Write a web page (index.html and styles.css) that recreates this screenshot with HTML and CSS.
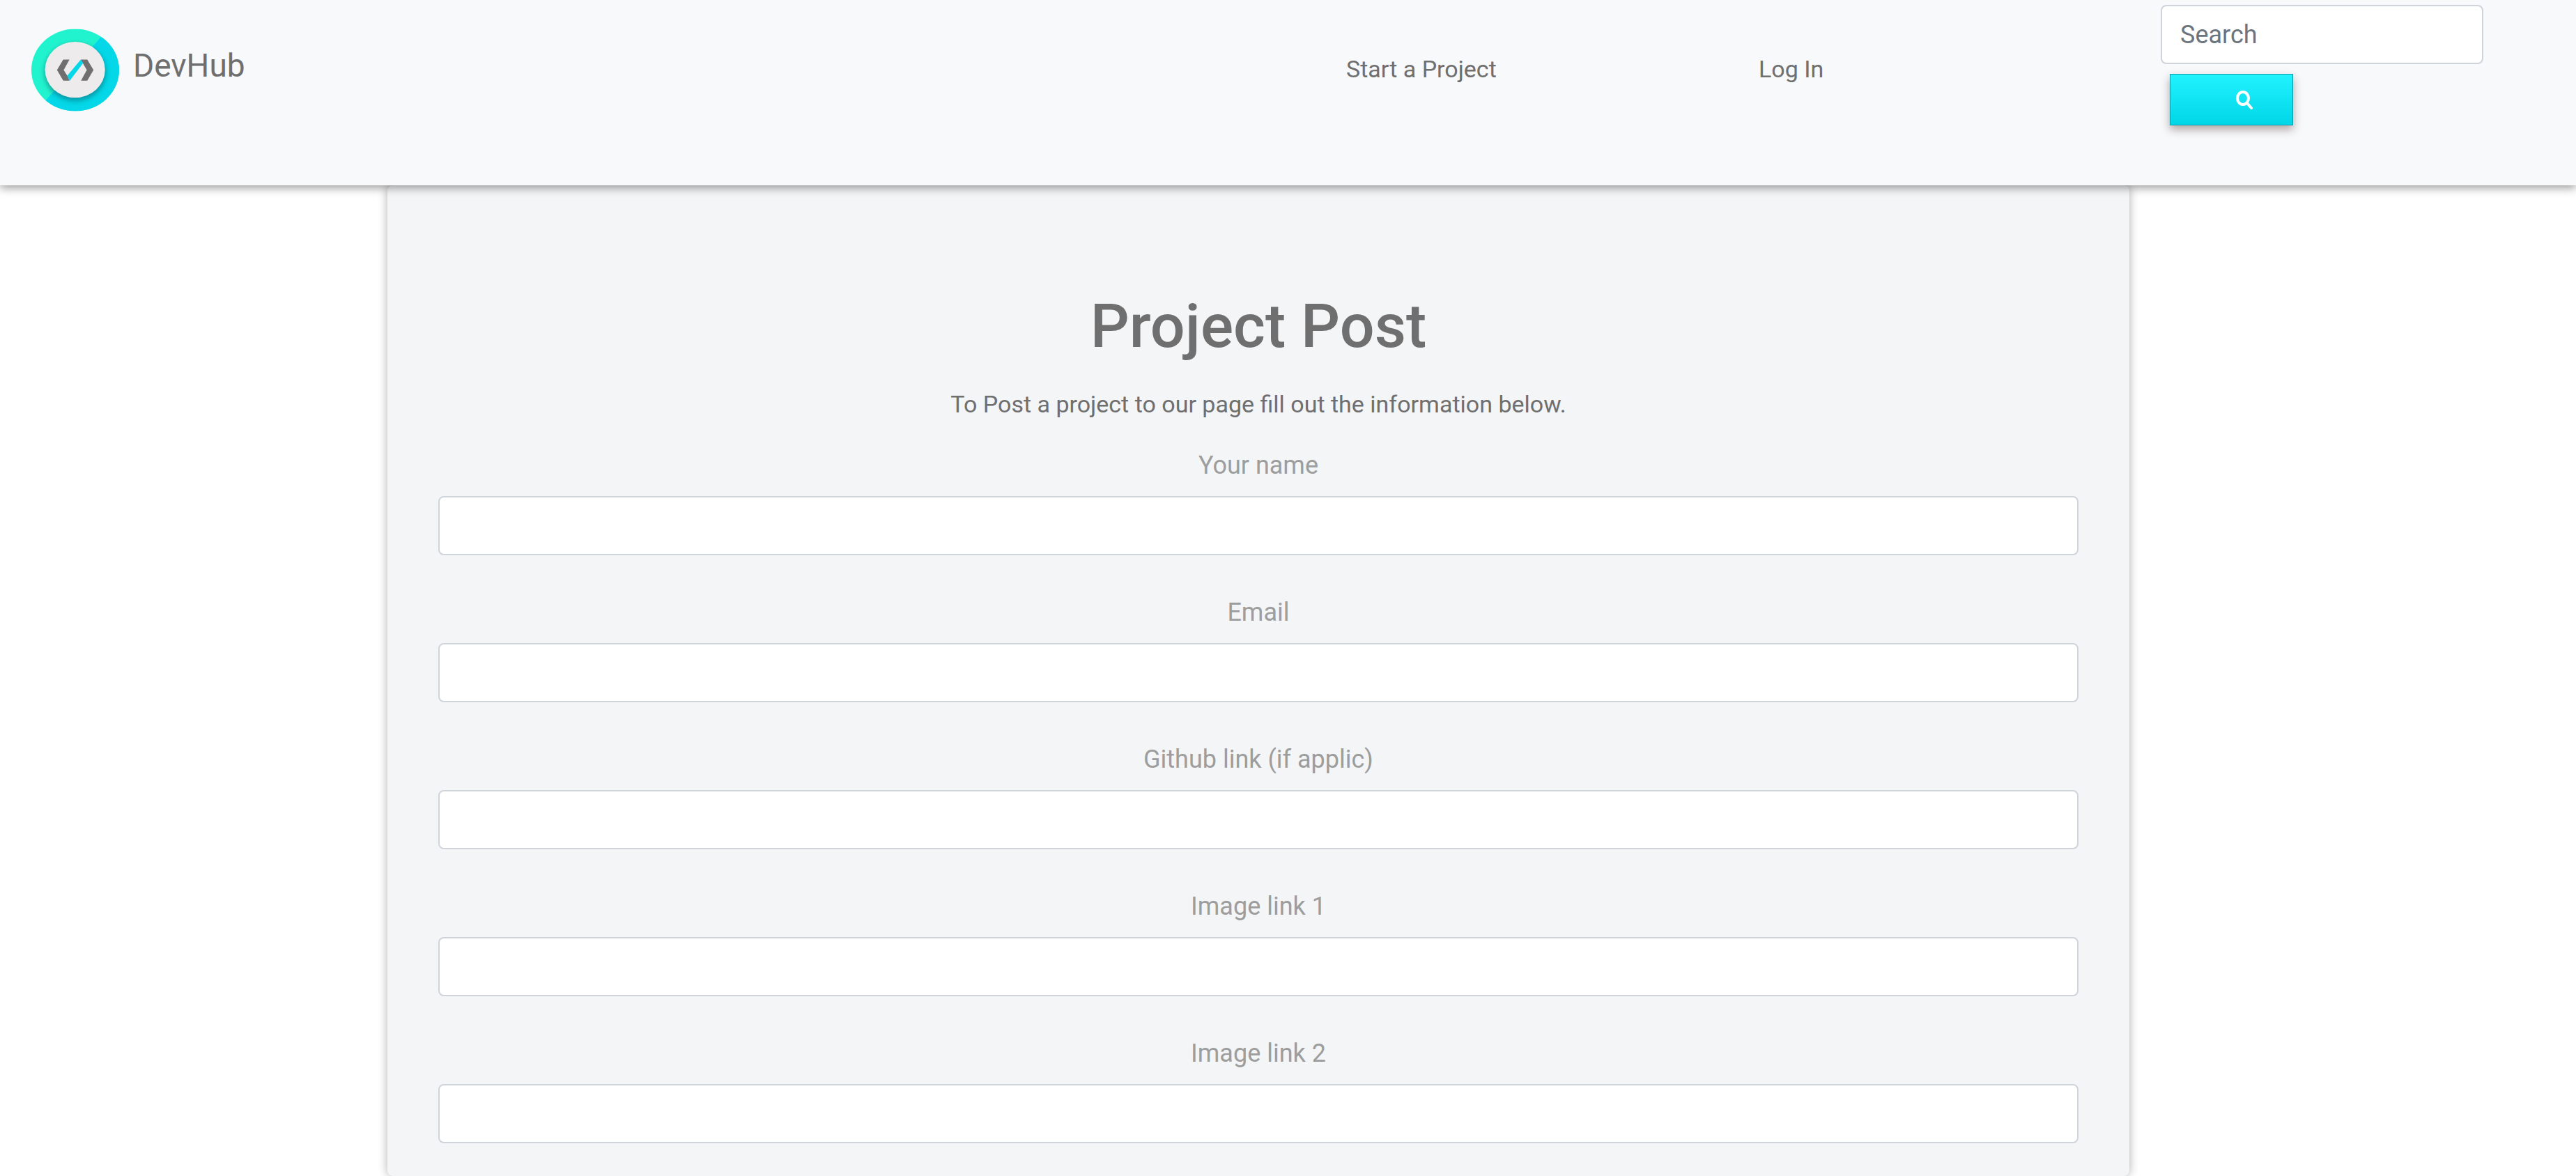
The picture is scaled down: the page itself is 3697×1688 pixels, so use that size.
FILE: index.html
```html
<!DOCTYPE html>
<html lang="en">
<head>
<meta charset="utf-8">
<meta name="viewport" content="width=device-width, initial-scale=1">
<title>DevHub - Project Post</title>
<link rel="stylesheet" href="styles.css">
</head>
<body>
<header class="site-header">
  <a class="brand" href="#">
    <svg class="brand-logo" viewBox="0 0 380 356" aria-hidden="true">
      <defs>
        <clipPath id="ring"><ellipse cx="190" cy="178" rx="190" ry="178"/></clipPath>
        <filter id="soft" x="-30%" y="-30%" width="160%" height="160%"><feGaussianBlur stdDeviation="12"/></filter>
      </defs>
      <g clip-path="url(#ring)">
        <rect width="380" height="356" fill="#22f3cf"/>
        <path d="M302 34L380 0V356H0L62 310Z" fill="#04d8e8"/>
        <ellipse cx="190" cy="188" rx="133" ry="124" fill="#075a62" opacity=".5" filter="url(#soft)"/>
      </g>
      <ellipse cx="189" cy="177" rx="130" ry="121" fill="#edebec"/>
      <path d="M138 133H165L140 178L158 207L165 224H138L111 178Z" fill="#706f70"/>
      <path d="M214 133H242L269 178L242 224H215L240 178L222 147Z" fill="#706f70"/>
      <path d="M214 133L224 148L166 225L155 203Z" fill="#04d8e8"/>
    </svg>
    <span class="brand-name">DevHub</span>
  </a>
  <a class="nav-link" href="#">Start a Project</a>
  <a class="nav-link" href="#">Log In</a>
  <form class="search" role="search">
    <input class="control search-input" type="search" placeholder="Search" aria-label="Search">
    <button class="search-button" type="button" aria-label="Submit search">
      <svg class="search-icon" viewBox="0 0 24 28" aria-hidden="true">
        <ellipse cx="10" cy="12" rx="8" ry="9" fill="none" stroke="#fff" stroke-width="4"/>
        <path d="M16 19L22 26" stroke="#fff" stroke-width="4" stroke-linecap="round"/>
      </svg>
    </button>
  </form>
</header>
<main class="card">
  <h1 class="title">Project Post</h1>
  <p class="intro">To Post a project to our page fill out the information below.</p>
  <form class="post-form">
    <div class="field"><label for="name">Your name</label><input class="control" id="name" type="text"></div>
    <div class="field"><label for="email">Email</label><input class="control" id="email" type="email"></div>
    <div class="field"><label for="github">Github link (if applic)</label><input class="control" id="github" type="url"></div>
    <div class="field"><label for="image1">Image link 1</label><input class="control" id="image1" type="url"></div>
    <div class="field"><label for="image2">Image link 2</label><input class="control" id="image2" type="url"></div>
  </form>
</main>
</body>
</html>
```
FILE: styles.css
```css
* {
  box-sizing: border-box;
}

body {
  margin: 0;
  min-height: 100vh;
  display: flex;
  flex-direction: column;
  background: #fff;
  color: #706f6f;
  font-family: Roboto, "Open Sans", sans-serif;
  font-size: 36px;
  line-height: 52px;
}

a {
  color: inherit;
  text-decoration: none;
}

.site-header {
  position: relative;
  display: grid;
  grid-template-columns: 1932fr 592fr 577fr 596fr;
  align-items: start;
  padding: 7px 0 86px;
  background: #f8f9fb;
  box-shadow: 0 4px 12px rgba(0, 0, 0, 0.38);
}

.brand {
  display: flex;
  align-items: center;
  gap: 20px;
  padding: 34px 0 0 45px;
}

.brand-logo {
  width: 126px;
  height: 119px;
}

.brand-name {
  padding-bottom: 14px;
  font-size: 46px;
}

.nav-link {
  padding-top: 66px;
  font-size: 34px;
}

.search {
  display: flex;
  flex-direction: column;
  align-items: flex-start;
  gap: 14px;
}

.control {
  display: block;
  width: 100%;
  height: 85px;
  padding: 0 26px;
  border: 2px solid #ced4da;
  border-radius: 8px;
  background: #fff;
  color: #495057;
  font: inherit;
}

.control::placeholder {
  color: #6c757d;
  opacity: 1;
}

.search-input {
  width: 463px;
  appearance: none;
}

.search-button {
  display: flex;
  align-items: center;
  width: 177px;
  height: 74px;
  margin-left: 13px;
  padding: 0 0 0 94px;
  border: 1px solid #0e9ca6;
  background: linear-gradient(#21f2ff, #00d6e7);
  box-shadow: 0 6px 12px rgba(60, 30, 30, 0.38);
}

.search-icon {
  width: 24px;
  height: 28px;
}

.card {
  flex: 1;
  width: 67.6%;
  margin-left: 15.05%;
  padding: 138px 73px 44px;
  border-radius: 8px;
  background: #f3f5f7;
  box-shadow: 0 0 14px rgba(0, 0, 0, 0.32);
  text-align: center;
}

.title {
  margin: 0;
  font-size: 88px;
  font-weight: 500;
  line-height: 128px;
}

.intro {
  margin: 22px 0 36px;
  font-size: 34px;
}

.post-form {
  display: grid;
  gap: 56px;
}

.field label {
  display: block;
  margin-bottom: 18px;
  color: #9d9d9d;
}
```
